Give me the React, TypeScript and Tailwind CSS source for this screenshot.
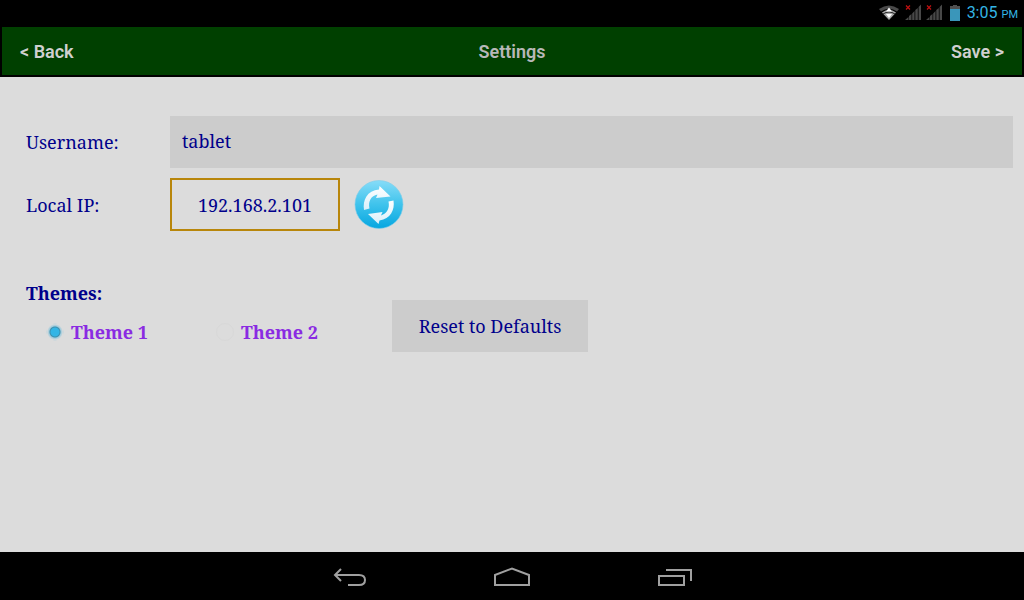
import { useState } from 'react';

const DEFAULTS = { username: 'tablet', theme: '1' };

const themes = [
  { id: '1', label: 'Theme 1' },
  { id: '2', label: 'Theme 2' },
];

export default function App() {
  const [username, setUsername] = useState(DEFAULTS.username);
  const [theme, setTheme] = useState(DEFAULTS.theme);

  const handleReset = () => {
    setUsername(DEFAULTS.username);
    setTheme(DEFAULTS.theme);
  };

  return (
    <div className="flex min-h-screen flex-col bg-[#dcdcdc]">
      <StatusBar />

      <header className="border-x-2 border-b-2 border-black bg-[#004000] font-['Roboto',sans-serif] text-lg font-semibold text-[#d0d0d0]">
        <div className="grid h-12 grid-cols-3 items-center px-[18px] pt-[2px]">
          <button type="button" className="justify-self-start">&lt; Back</button>
          <h1 className="justify-self-center text-[#b8b8b8]">Settings</h1>
          <button type="button" className="justify-self-end">Save &gt;</button>
        </div>
      </header>

      <main className="flex-1 pt-[39px] pr-[11px] pl-[26px] font-['Droid_Serif','Noto_Serif','Liberation_Serif',serif] text-lg leading-6 text-[#00008b]">
        <div className="flex items-center">
          <label htmlFor="username" className="w-36">Username:</label>
          <input
            id="username"
            value={username}
            onChange={(e) => setUsername(e.target.value)}
            className="h-[52px] min-w-0 flex-1 bg-[#cccccc] px-3 pb-[2px] outline-none"
          />
        </div>

        <div className="mt-[10px] flex items-center">
          <span className="w-36">Local IP:</span>
          <output className="flex h-[53px] w-[170px] items-center justify-center border-2 border-[#b8860b]">
            192.168.2.101
          </output>
          <button type="button" aria-label="Refresh" className="ml-[14px]">
            <RefreshIcon />
          </button>
        </div>

        <div className="mt-[50px] flex items-start">
          <fieldset className="w-[366px]">
            <legend className="font-bold">Themes:</legend>
            <div className="flex pt-[15px] pl-5 font-bold text-[#8a2be2]">
              {themes.map((t) => (
                <label key={t.id} className="flex w-[170px] items-center gap-[7px]">
                  <input
                    type="radio"
                    name="theme"
                    value={t.id}
                    checked={theme === t.id}
                    onChange={() => setTheme(t.id)}
                    className="h-[18px] w-[18px] appearance-none rounded-full border border-[#d8d8d8] checked:border-transparent checked:bg-[radial-gradient(circle,#33b5e5_0,#33b5e5_4px,#3d8eab_5px,#9fcbdc_6px,#dcdcdc_8px)]"
                  />
                  {t.label}
                </label>
              ))}
            </div>
          </fieldset>
          <button type="button" onClick={handleReset} className="mt-[19px] h-[52px] w-[196px] bg-[#cccccc]">
            Reset to Defaults
          </button>
        </div>
      </main>

      <NavBar />
    </div>
  );
}

function StatusBar() {
  return (
    <div className="flex h-[27px] items-center justify-end bg-black pr-[6px] pb-[2px] font-['Roboto',sans-serif] text-[#33b5e5]">
      <svg width="20" height="16" viewBox="0 0 20 16" className="mr-[6px]">
        <path d="M0 4Q10-3 20 4L18 6.5Q10 1 2 6.5Z" fill="#4a4a4a" />
        <path d="M3 7.5Q10 2 17 7.5L10 15Z" fill="#a8a8a8" />
        <path d="M4 9Q10 5 16 9" fill="none" stroke="#222" />
        <path d="M7 6.5L10 2.5L13 6.5ZM7 9H13L10 13Z" fill="#fff" />
      </svg>
      <SignalIcon />
      <SignalIcon />
      <svg width="10" height="16" viewBox="0 0 10 16" className="mr-[7px] ml-[3px]">
        <path d="M3 0H7V1H10V4H0V1H3Z" fill="#505050" />
        <path d="M0 4H10V16H0Z" fill="#3a96ba" />
      </svg>
      <span className="text-base">
        3:05 <span className="text-[11px]">PM</span>
      </span>
    </div>
  );
}

function SignalIcon() {
  return (
    <svg width="17" height="17" viewBox="0 0 17 17" className="mr-1">
      <path d="M0 16L3.500 13V16ZM4 12L6.500 10V16H4ZM7.200 9.500L9.500 7V16H7.200ZM10.300 6L12.800 4V16H10.300ZM13.600 3L16 .5V16H13.600Z" fill="#484848" />
      <path d="M1 1.500L5 5.500M5 1.500L1 5.500" stroke="#c01010" strokeWidth="1.2" />
    </svg>
  );
}

function RefreshIcon() {
  return (
    <svg width="50" height="50" viewBox="0 0 50 50" className="block">
      <defs>
        <linearGradient id="disc" x1="0" y1="0" x2="0" y2="1">
          <stop offset="0" stopColor="#86dcf8" />
          <stop offset="0.5" stopColor="#3fc3ec" />
          <stop offset="1" stopColor="#06a6e0" />
        </linearGradient>
        <linearGradient id="arrow" x1="0" y1="0" x2="0" y2="1">
          <stop offset="0" stopColor="#ffffff" />
          <stop offset="1" stopColor="#d8effa" />
        </linearGradient>
      </defs>
      <circle cx="25" cy="24.500" r="24" fill="url(#disc)" stroke="#7fcdea" strokeOpacity="0.6" />
      <path d="M10 30C8.500 20 13 10.500 25 9.500L25.500 6L36.500 16.500L22 18L23.500 14.500C17 16 14 21 15.500 28.500Z" fill="url(#arrow)" />
      <path d="M39.500 20.500C41 30 36.500 39 25.500 40.500L24.500 44L14 34L28.500 32L27 35.500C33 33.500 36 28 34.500 21.500Z" fill="url(#arrow)" />
    </svg>
  );
}

function NavBar() {
  return (
    <nav className="flex h-12 items-center justify-center gap-[126px] bg-black pt-[2px] text-[#a0a0a0]">
      <button type="button" aria-label="Back">
        <svg width="36" height="20" viewBox="0 0 36 20" fill="none" stroke="currentColor" strokeWidth="2">
          <path d="M9 2L3 8L9 14M3 8H27Q33 8 33 13Q33 18 27 18H16" />
        </svg>
      </button>
      <button type="button" aria-label="Home">
        <svg width="36" height="20" viewBox="0 0 36 20" fill="none" stroke="currentColor" strokeWidth="2">
          <path d="M1 8L18 1.500L35 8V18H1Z" />
        </svg>
      </button>
      <button type="button" aria-label="Recent apps">
        <svg width="36" height="20" viewBox="0 0 36 20" fill="none" stroke="currentColor" strokeWidth="2">
          <path d="M3 9H28V18H3ZM10 3H35V14" />
        </svg>
      </button>
    </nav>
  );
}
